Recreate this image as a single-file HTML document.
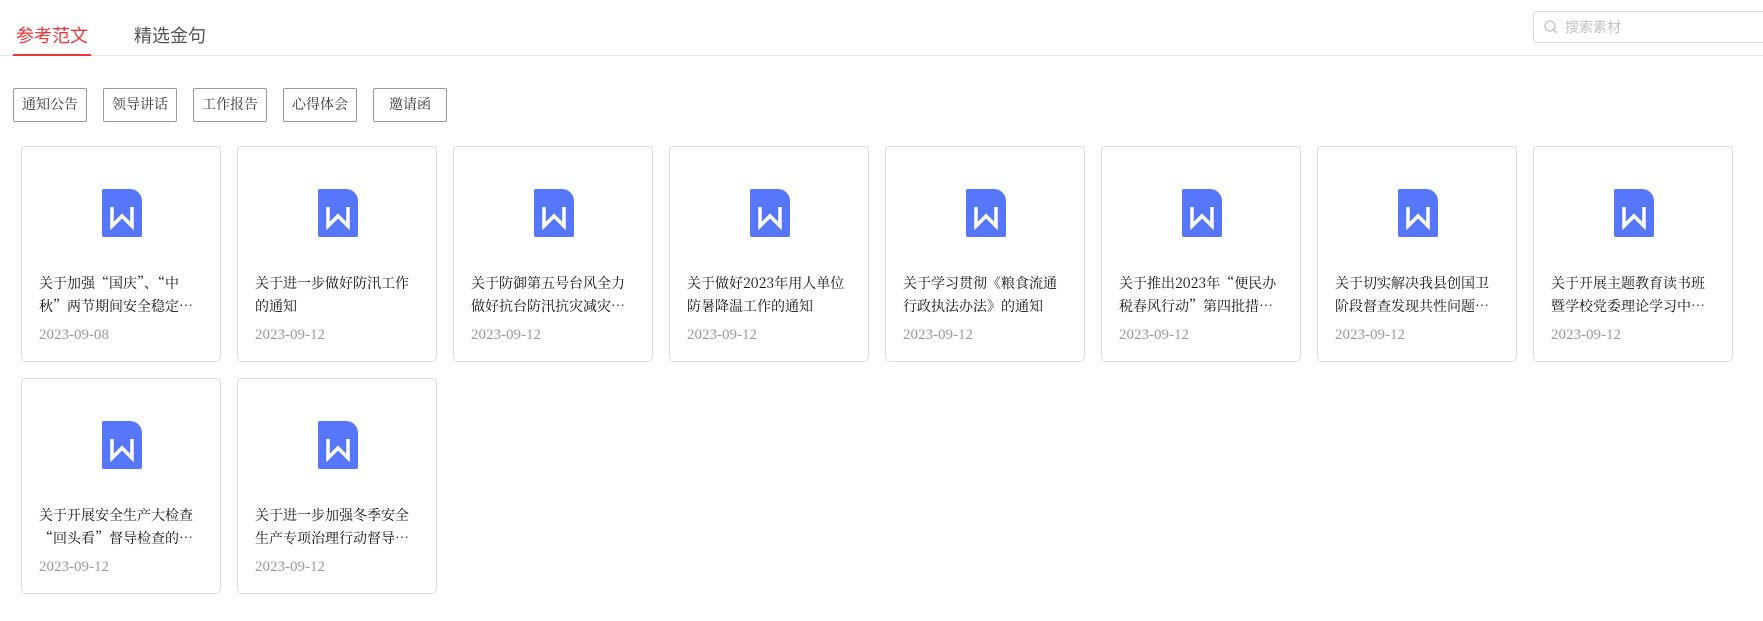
<!DOCTYPE html>
<html><head><meta charset="utf-8"><style>
*{margin:0;padding:0;box-sizing:border-box}
body{width:1763px;height:621px;background:#fff;position:relative;overflow:hidden;font-family:"Liberation Serif","Noto Serif CJK SC",serif}
.tab{position:absolute;top:22px;font-family:"Liberation Sans","Noto Sans CJK SC",sans-serif;font-size:18px}
.line{position:absolute;left:0;right:0;top:55px;height:1px;background:#e4e4e4}
.ul{position:absolute;left:13px;top:54px;width:78px;height:2px;background:#f2333a}
.search{position:absolute;left:1533px;top:11px;width:240px;height:32px;border:1px solid #d9d9e0;border-radius:4px;font-family:"Liberation Sans","Noto Sans CJK SC",sans-serif;font-size:14px;color:#c0c0c8;padding-left:31px;line-height:30px}
.btn{position:absolute;top:88px;width:74px;height:34px;border:1px solid #999;border-radius:2px;font-size:14px;color:#333;text-align:center;line-height:34px}
.card{position:absolute;width:200px;height:216px;border:1px solid #dcdcdc;border-radius:5px}
.card svg{position:absolute;left:80px;top:42px}
.t{position:absolute;left:17px;top:125px;font-size:14px;line-height:23px;color:#111;white-space:nowrap;font-family:"Noto Serif CJK SC",serif}
.d{position:absolute;left:17px;top:180px;font-size:15px;color:#999}
</style></head><body>
<div class="tab" style="left:16px;color:#f2333a">参考范文</div>
<div class="tab" style="left:134px;color:#555">精选金句</div>
<div class="line"></div><div class="ul"></div>
<div class="search"><svg style="position:absolute;left:10px;top:8px" width="14" height="14" viewBox="0 0 14 14"><circle cx="6" cy="6" r="5" fill="none" stroke="#c0c0c8" stroke-width="1.3"/><path d="M10 10l3 3" stroke="#c0c0c8" stroke-width="1.3"/></svg>搜索素材</div>
<div class="btn" style="left:13px">通知公告</div>
<div class="btn" style="left:103px">领导讲话</div>
<div class="btn" style="left:193px">工作报告</div>
<div class="btn" style="left:283px">心得体会</div>
<div class="btn" style="left:373px">邀请函</div>
<div id="cards"></div>
<script>
var T=[["关于加强“国庆”、“中","秋”两节期间安全稳定…","2023-09-08"],["关于进一步做好防汛工作","的通知","2023-09-12"],["关于防御第五号台风全力","做好抗台防汛抗灾减灾…","2023-09-12"],["关于做好2023年用人单位","防暑降温工作的通知","2023-09-12"],["关于学习贯彻《粮食流通","行政执法办法》的通知","2023-09-12"],["关于推出2023年“便民办","税春风行动”第四批措…","2023-09-12"],["关于切实解决我县创国卫","阶段督查发现共性问题…","2023-09-12"],["关于开展主题教育读书班","暨学校党委理论学习中…","2023-09-12"],["关于开展安全生产大检查","“回头看”督导检查的…","2023-09-12"],["关于进一步加强冬季安全","生产专项治理行动督导…","2023-09-12"]];
var h="";
T.forEach(function(x,i){var c=i%8,r=Math.floor(i/8);
h+='<div class="card" style="left:'+(21+c*216)+'px;top:'+(146+r*232)+'px"><svg width="40" height="48" viewBox="0 0 40 48"><path d="M2 0H28A12 12 0 0 1 40 12V46A2 2 0 0 1 38 48H2A2 2 0 0 1 0 46V2A2 2 0 0 1 2 0Z" fill="#5677fc"/><path d="M10 18V37L20 27L30 37V18" fill="none" stroke="#fff" stroke-width="3.5"/></svg><div class="t">'+x[0]+'<br>'+x[1]+'</div><div class="d">'+x[2]+'</div></div>';});
document.getElementById("cards").innerHTML=h;
</script>
</body></html>
